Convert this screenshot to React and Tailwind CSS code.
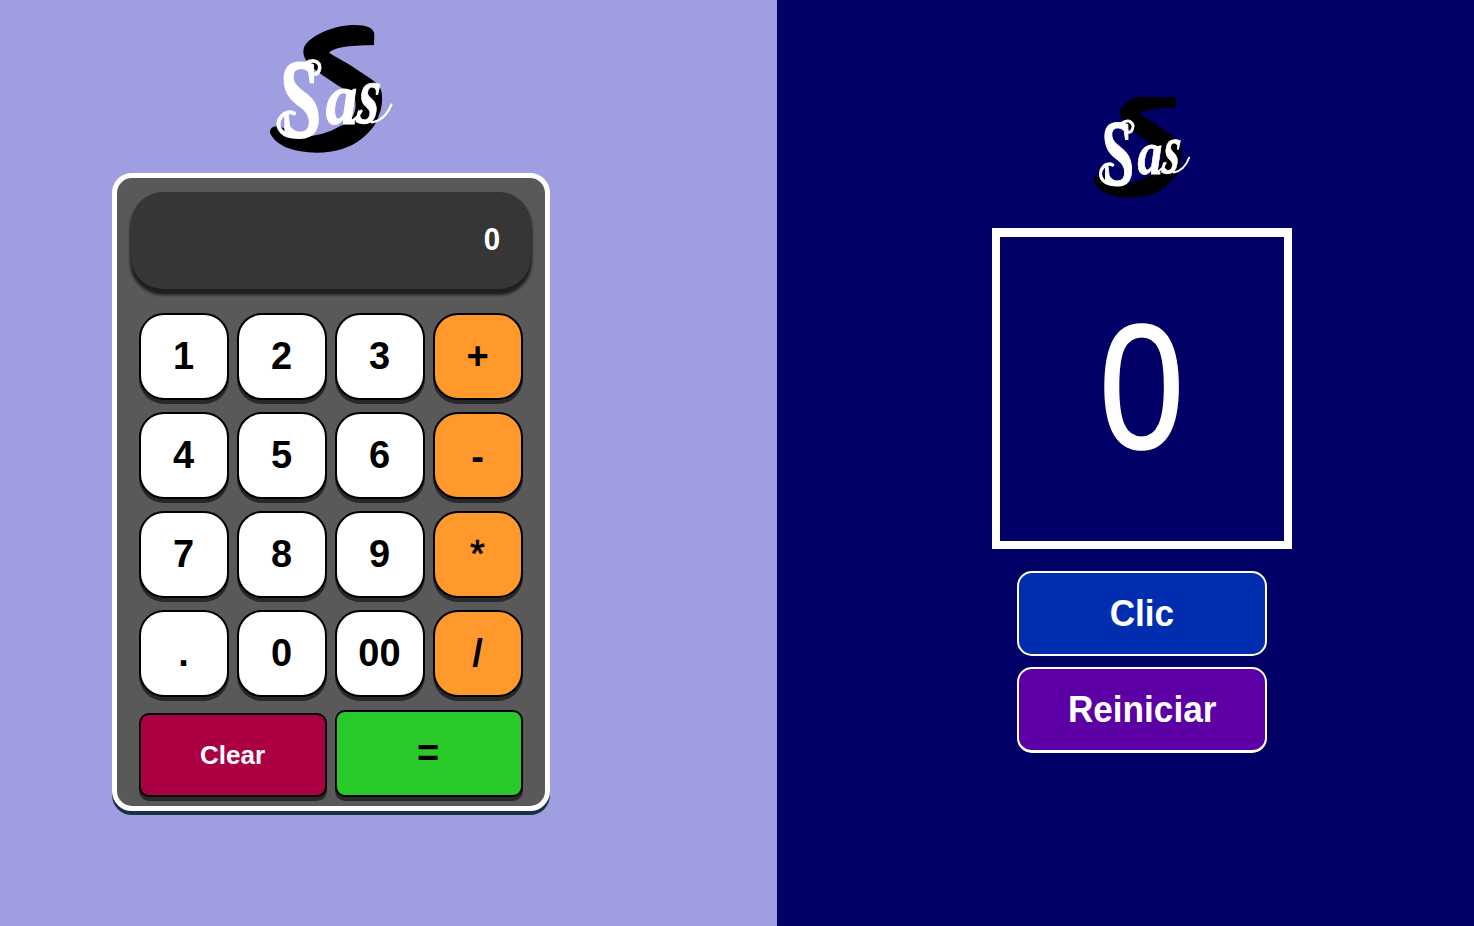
import { useState } from "react";

const KEYS = ["1", "2", "3", "+", "4", "5", "6", "-", "7", "8", "9", "*", ".", "0", "00", "/"];

function Logo({ className, viewBox }) {
  return (
    <svg className={className} viewBox={viewBox} preserveAspectRatio="none" role="img" aria-label="Sas">
      <path
        d="M342 90 L343 60 C343 38 318 30 285 30 C220 30 150 62 133 95 C126 112 132 130 146 146 C162 164 210 196 240 215 C264 230 280 240 285 252 C288 270 288 285 280 300 C268 320 258 326 240 334 C205 354 170 364 130 364 C90 360 80 336 50 334 C32 334 27 348 32 358 C50 392 100 413 170 413 C225 413 270 398 300 375 C335 348 350 325 357 300 C366 280 370 245 362 222 C356 210 345 200 330 190 L270 150 C250 137 228 127 207 113 C225 96 262 92 342 90 Z"
        fill="#000"
      />
      <g fill="#fff" fontFamily="'Liberation Serif', serif" fontStyle="italic" fontWeight="700">
        <text transform="translate(72 366) skewX(7) scale(0.66 1)" fontSize="338" stroke="#fff" strokeWidth="5">S</text>
        <text transform="translate(197 327) scale(0.86 1)" fontSize="220" stroke="#fff" strokeWidth="3">a</text>
        <text transform="translate(288 325) skewX(-6) scale(0.78 1.18)" fontSize="215" stroke="#fff" strokeWidth="2">s</text>
      </g>
      <g fill="none" stroke="#fff" strokeLinecap="round">
        <path d="M135 146 C165 126 186 146 177 167 C171 181 154 181 156 170" strokeWidth="11" />
        <path d="M112 364 C70 368 48 340 58 314 C68 294 86 287 102 295" strokeWidth="12" />
        <path d="M264 318 C282 322 294 306 304 288" strokeWidth="8" />
        <path d="M335 322 C364 318 383 296 394 269" strokeWidth="7" />
      </g>
    </svg>
  );
}

function Calculator() {
  const [value, setValue] = useState("0");
  const press = (k) => setValue((v) => (v === "0" ? k : v + k));
  return (
    <div className="h-[638px] w-[438px] rounded-[20px] border-5 border-white bg-[#595959] px-[22px] pt-[14px] shadow-[0_4px_0_#1b2f47]">
      <div className="-mx-2 flex h-[97px] items-center justify-end rounded-[32px] bg-[#363636] pr-[31px] text-[31px] font-bold text-white shadow-[0_5px_3px_1px_#1e1e1e]">
        <span className="origin-right scale-x-95">{value}</span>
      </div>
      <div className="mt-6 grid grid-cols-4 gap-x-2 gap-y-3">
        {KEYS.map((k, i) => (
          <button
            key={k}
            onClick={() => press(k)}
            className={`h-[87px] rounded-[25px] border-2 border-black pr-px text-[38px] text-black shadow-[0_4px_0_#282828] ${k === "-" ? "pt-1" : ""} ${k === "*" ? "font-normal [-webkit-text-stroke:0.7px_black]" : "font-bold"} ${i % 4 === 3 ? "bg-[#ff992b]" : "bg-white"}`}
          >
            {k}
          </button>
        ))}
      </div>
      <div className="mt-[13px] grid grid-cols-2 items-end gap-2">
        <button
          onClick={() => setValue("0")}
          className="h-[84px] rounded-[10px] border-2 border-black bg-[#ab0044] pr-px text-[26px] font-bold text-white shadow-[0_4px_0_#282828]"
        >
          Clear
        </button>
        <button className="h-[87px] rounded-[10px] border-2 border-black bg-[#28c928] pr-[2px] text-[38px] font-bold text-black shadow-[0_4px_0_#282828]">
          =
        </button>
      </div>
    </div>
  );
}

function Counter() {
  const [count, setCount] = useState(0);
  return (
    <>
      <div className="flex h-[321px] w-[300px] items-center justify-center border-8 border-t-9 border-white pr-[2px] pb-[5px] text-[178px] text-white">
        <span className="scale-x-86 [-webkit-text-stroke:1.5px_white]">{count}</span>
      </div>
      <button
        onClick={() => setCount(count + 1)}
        className="mt-[22px] h-[85px] w-[250px] rounded-[15px] border-2 border-white bg-[#002eae] text-[37px] font-bold text-white"
      >
        <span className="inline-block scale-x-95">Clic</span>
      </button>
      <button
        onClick={() => setCount(0)}
        className="mt-[11px] h-[86px] w-[250px] rounded-[15px] border-2 border-b-3 border-white bg-[#5c00a6] text-[37px] font-bold text-white"
      >
        <span className="inline-block scale-x-95">Reiniciar</span>
      </button>
    </>
  );
}

export default function App() {
  return (
    <main className="flex h-[926px] w-[1474px] overflow-hidden font-['Liberation_Sans',Arial,sans-serif]">
      <section className="w-[777px] bg-[#9e9ee1] pt-[15px] pl-28">
        <Logo className="ml-[148px] h-[155px] w-[140px]" viewBox="0 0 420 465" />
        <div className="mt-[3px]">
          <Calculator />
        </div>
      </section>
      <section className="flex flex-1 flex-col items-center bg-[#000066] pt-[97px] pl-[33px]">
        <Logo className="mr-[2px] h-[115px] w-[110px] shrink-0" viewBox="0 51 420 413" />
        <div className="mt-4 flex flex-col items-center">
          <Counter />
        </div>
      </section>
    </main>
  );
}
